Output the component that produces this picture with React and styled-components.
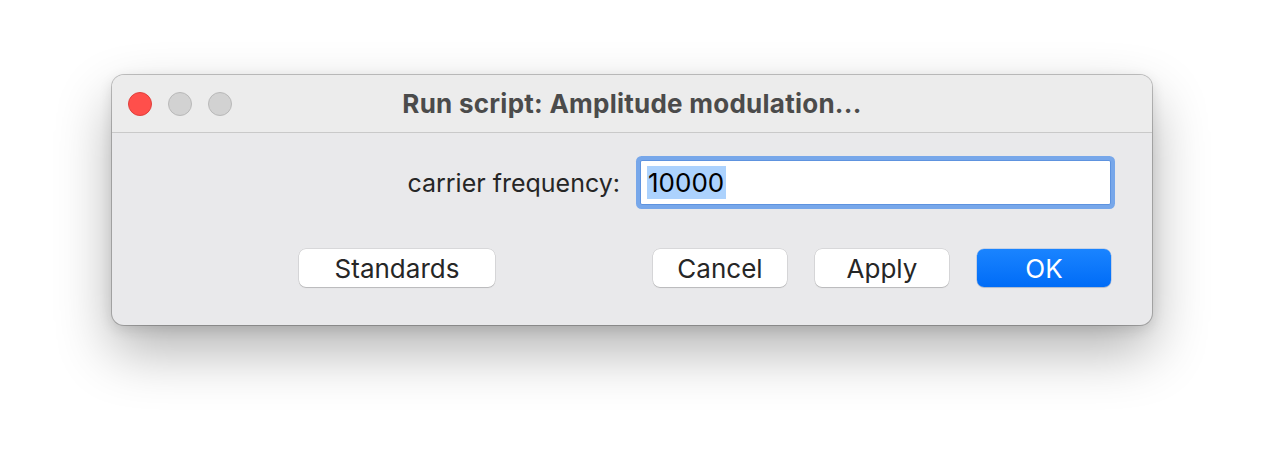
import React from "react";
import styled, { createGlobalStyle } from "styled-components";

const Global = createGlobalStyle`
  html, body { margin: 0; padding: 0; background: #ffffff; }
  body { font-family: Inter, "Liberation Sans", Arial, sans-serif; }
`;

const Page = styled.div`
  width: 1264px;
  height: 474px;
  box-sizing: border-box;
  padding: 75px 112px 0 112px;
  background: #ffffff;
`;

const Window = styled.div`
  width: 1040px;
  height: 250px;
  border-radius: 12px;
  overflow: hidden;
  background: #e9e9eb;
  box-shadow: 0 0 0 1px rgba(0, 0, 0, 0.22), 0 26px 56px rgba(0, 0, 0, 0.3),
    0 4px 14px rgba(0, 0, 0, 0.12);
  display: flex;
  flex-direction: column;
`;

const TitleBar = styled.div`
  height: 57px;
  flex: none;
  background: #ececec;
  border-bottom: 1px solid #c9c9c9;
  display: grid;
  grid-template-columns: 1fr auto 1fr;
  align-items: center;
  padding: 0 16px;
`;

const Lights = styled.div`
  display: flex;
  gap: 16px;
`;

const Light = styled.span`
  width: 22px;
  height: 22px;
  border-radius: 50%;
  background: ${(p) => (p.$close ? "#ff4f4b" : "#d2d2d2")};
  border: 1px solid ${(p) => (p.$close ? "#e0403c" : "#b9b9b9")};
`;

const Title = styled.div`
  font-family: Inter, "Liberation Sans", Arial, sans-serif;
  font-weight: 700;
  font-size: 26px;
  letter-spacing: 0.25px;
  color: #4b4b4b;
  padding-bottom: 1px;
`;

const Content = styled.div`
  flex: 1;
  padding: 27px 41px 37px 41px;
  display: flex;
  flex-direction: column;
`;

const FieldRow = styled.div`
  display: flex;
  justify-content: flex-end;
  align-items: center;
  gap: 20px;
`;

const Label = styled.label`
  font-family: Inter, "Liberation Sans", Arial, sans-serif;
  font-size: 25px;
  color: #262626;
`;

const Input = styled.div`
  width: 471px;
  height: 45px;
  box-sizing: border-box;
  background: #ffffff;
  border: 1px solid #5e93df;
  border-radius: 2px;
  box-shadow: 0 0 0 4px #77a7ea;
  display: flex;
  align-items: center;
  padding-left: 6px;
`;

const Selected = styled.span`
  font-family: Inter, "Liberation Sans", Arial, sans-serif;
  background: #acd2fd;
  color: #000000;
  font-size: 26px;
  line-height: 33px;
  padding: 0 2px 0 1px;
`;

const ButtonRow = styled.div`
  margin-top: 44px;
  display: flex;
  justify-content: flex-end;
  gap: 28px;
`;

const Button = styled.button`
  width: ${(p) => p.$w || 134}px;
  height: 38px;
  margin-right: ${(p) => p.$after || 0}px;
  border-radius: 7px;
  border: none;
  font-family: Inter, "Liberation Sans", Arial, sans-serif;
  font-size: 26px;
  color: ${(p) => (p.$primary ? "#ffffff" : "#262626")};
  background: ${(p) =>
    p.$primary ? "linear-gradient(#1a84ff, #006cf7)" : "#ffffff"};
  box-shadow: ${(p) =>
    p.$primary
      ? "0 0 0 0.5px rgba(0,80,200,0.3), 0 1px 1px rgba(0,0,0,0.12)"
      : "0 0 0 0.5px rgba(0,0,0,0.14), 0 1px 1px rgba(0,0,0,0.14)"};
  padding: 0;
  cursor: default;
`;

export default function App() {
  return (
    <>
      <Global />
      <Page>
        <Window>
          <TitleBar>
            <Lights>
              <Light $close />
              <Light />
              <Light />
            </Lights>
            <Title>Run script: Amplitude modulation...</Title>
            <div />
          </TitleBar>
          <Content>
            <FieldRow>
              <Label>carrier frequency:</Label>
              <Input>
                <Selected>10000</Selected>
              </Input>
            </FieldRow>
            <ButtonRow>
              <Button $w={196} $after={130}>Standards</Button>
              <Button>Cancel</Button>
              <Button>Apply</Button>
              <Button $primary>OK</Button>
            </ButtonRow>
          </Content>
        </Window>
      </Page>
    </>
  );
}
